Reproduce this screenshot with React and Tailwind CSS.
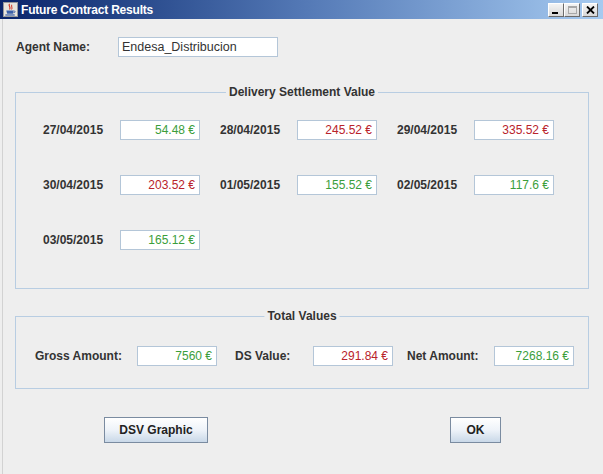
import React from "react";

const FONT = { fontFamily: '"Liberation Sans", Arial, sans-serif' };

function JavaIcon() {
  return (
    <svg width="15" height="15" viewBox="0 0 16 16">
      <rect x="0.5" y="0.5" width="15" height="15" fill="#e8e4dc" stroke="#9a9a9a" />
      <path d="M7 2 C5 4, 9 5, 7 8" stroke="#d23a2a" strokeWidth="1.3" fill="none" />
      <path d="M9.5 3 C8 5, 11 6, 9 8" stroke="#d23a2a" strokeWidth="1.1" fill="none" />
      <path d="M3.5 9 L11.5 9 L10.5 12.5 L4.5 12.5 Z" fill="#3a5fa8" />
      <path d="M11.5 9.5 C13.5 9.5, 13.5 11.5, 11 11.5" stroke="#3a5fa8" strokeWidth="1" fill="none" />
      <rect x="2.5" y="13.2" width="10" height="1.3" fill="#3a5fa8" />
    </svg>
  );
}

function WinBtn({ kind }) {
  return (
    <div className="w-[16px] h-[14px] bg-gradient-to-b from-[#f4f4f4] to-[#d8d8d8] border border-t-white border-l-white border-r-[#6a6a6a] border-b-[#6a6a6a] flex items-center justify-center">
      {kind === "min" && <div className="w-[6px] h-[2px] bg-black mt-[6px] -ml-[3px]" />}
      {kind === "max" && <div className="w-[9px] h-[8px] border border-[#a8a8a8] border-t-2" />}
      {kind === "close" && (
        <svg width="9" height="8" viewBox="0 0 9 8">
          <path d="M1 0.5 L8 7.5 M8 0.5 L1 7.5" stroke="#000" strokeWidth="1.8" />
        </svg>
      )}
    </div>
  );
}

function Box({ value, color, width = "w-[80px]" }) {
  const c = color === "g" ? "text-[#3b9e3b]" : "text-[#b9232b]";
  return (
    <div
      className={`${width} h-[20px] bg-white border border-[#b4c6d8] flex items-center justify-end pr-[4px] text-[12px] ${c}`}
    >
      {value}
    </div>
  );
}

function Cell({ date, value, color }) {
  return (
    <div className="flex items-center">
      <div className="w-[77px] font-bold text-[12px] text-[#333333]">{date}</div>
      <Box value={value} color={color} />
    </div>
  );
}

function Group({ title, className, children }) {
  return (
    <div className={`relative border border-[#b8cde2] ${className}`}>
      <span className="absolute left-1/2 -translate-x-1/2 top-[-8px] bg-[#eeeeee] px-[3px] font-bold text-[12px] leading-[14px] text-[#333333] whitespace-nowrap">
        {title}
      </span>
      {children}
    </div>
  );
}

function Button({ children, className }) {
  return (
    <button
      className={`h-[26px] border border-[#7a8ba0] bg-gradient-to-b from-[#ffffff] via-[#eef3f9] to-[#c9d8e8] font-bold text-[12px] text-[#222222] flex items-center justify-center ${className}`}
    >
      {children}
    </button>
  );
}

export default function App() {
  const rows = [
    [
      ["27/04/2015", "54.48 €", "g"],
      ["28/04/2015", "245.52 €", "r"],
      ["29/04/2015", "335.52 €", "r"],
    ],
    [
      ["30/04/2015", "203.52 €", "r"],
      ["01/05/2015", "155.52 €", "g"],
      ["02/05/2015", "117.6 €", "g"],
    ],
    [["03/05/2015", "165.12 €", "g"]],
  ];
  return (
    <div style={FONT} className="w-[603px] h-[474px] bg-[#eeeeee] overflow-hidden flex flex-col">
      {/* Title bar */}
      <div className="h-[19px] shrink-0 bg-gradient-to-r from-[#0a246a] via-[#5378b5] to-[#a6caf0] flex items-center pl-[3px] pr-[5px]">
        <JavaIcon />
        <span className="ml-[3px] text-white font-bold text-[12px] leading-none tracking-[-0.2px]">
          Future Contract Results
        </span>
        <div className="ml-auto flex items-center">
          <WinBtn kind="min" />
          <WinBtn kind="max" />
          <div className="w-[2px]" />
          <WinBtn kind="close" />
        </div>
      </div>

      {/* Body */}
      <div className="flex-1 ml-[2px] border-l border-[#d2d2d2] flex flex-col">
        {/* Agent row */}
        <div className="flex items-center mt-[18px] ml-[13px]">
          <div className="w-[102px] font-bold text-[12px] text-[#333333]">Agent Name:</div>
          <div className="w-[160px] h-[20px] bg-white border border-[#b4c6d8] flex items-center pl-[3px] text-[12.5px] text-[#333333]">
            Endesa_Distribucion
          </div>
        </div>

        {/* Delivery Settlement Value */}
        <Group title="Delivery Settlement Value" className="mt-[35px] ml-[12px] w-[574px] h-[197px] pt-[27px] pl-[27px]">
          <div className="grid grid-cols-[repeat(3,177px)] gap-y-[35px]">
            {rows.flat().map(([d, v, c]) => (
              <Cell key={d} date={d} value={v} color={c} />
            ))}
          </div>
        </Group>

        {/* Total Values */}
        <Group title="Total Values" className="mt-[27px] ml-[12px] w-[574px] h-[73px] pt-[29px] pl-[19px]">
          <div className="flex items-center">
            <div className="w-[102px] font-bold text-[12px] text-[#333333]">Gross Amount:</div>
            <Box value="7560 €" color="g" />
            <div className="w-[78px] ml-[18px] font-bold text-[12px] text-[#333333]">DS Value:</div>
            <Box value="291.84 €" color="r" />
            <div className="w-[87px] ml-[14px] font-bold text-[12px] text-[#333333]">Net Amount:</div>
            <Box value="7268.16 €" color="g" />
          </div>
        </Group>

        {/* Buttons */}
        <div className="flex items-center mt-[28px] ml-[101px]">
          <Button className="w-[104px]">DSV Graphic</Button>
          <Button className="w-[51px] ml-[242px]">OK</Button>
        </div>
      </div>
    </div>
  );
}
